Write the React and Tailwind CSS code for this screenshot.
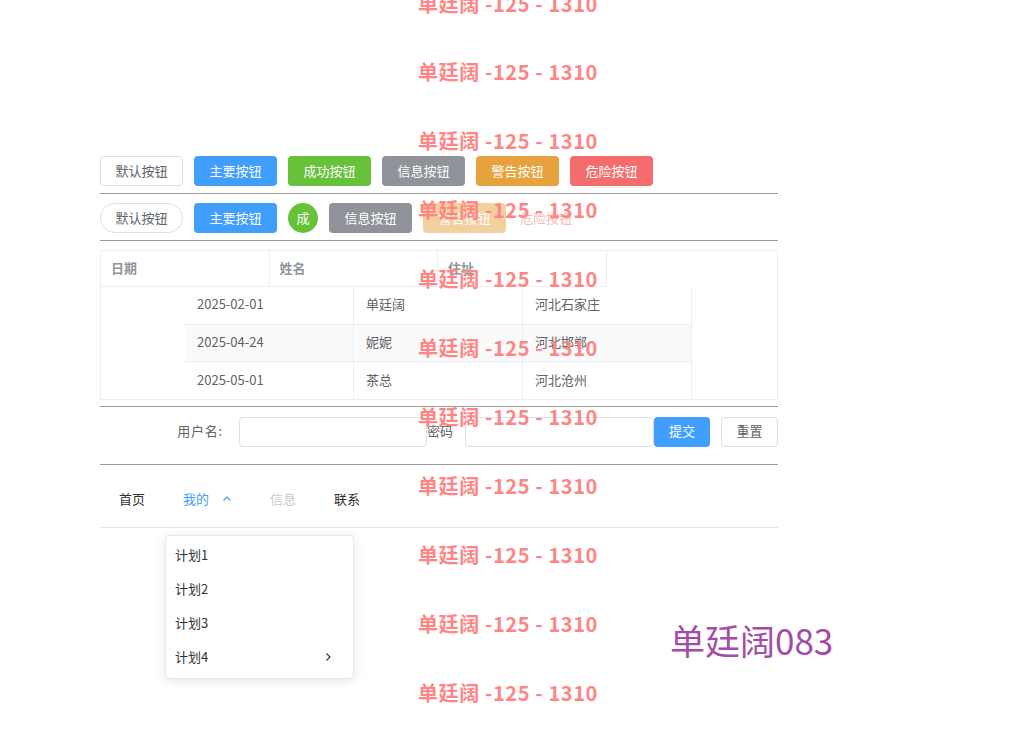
import React from "react";

const font = { fontFamily: '"Noto Sans CJK SC", "Noto Sans", sans-serif' };

const rows = [
 { date: "2025-02-01", name: "单廷阔", addr: "河北石家庄" },
 { date: "2025-04-24", name: "妮妮", addr: "河北邯郸" },
 { date: "2025-05-01", name: "茶总", addr: "河北沧州" },
];

const Btn = ({ className, children }) => (
 <button
  className={
   "h-[30px] w-[83px] pb-[2px] rounded-[4px] text-[13px] leading-none flex items-center justify-center " +
   className
  }
 >
  {children}
 </button>
);

const Line = () => <div className="h-[2px] border-t border-[#9c9c9c] border-b-[#e6e6e6]" />;

const Watermark = () => (
 <div className="absolute inset-0 pointer-events-none">
  {[4, 72, 141, 210, 279, 348, 417, 486, 555, 624, 693].map((y) => (
   <div
    key={y}
    className="absolute left-[418px] text-[20px] font-bold leading-[24px] tracking-[0.6px] text-[#ff8585] whitespace-nowrap"
    style={{ top: y - 12, ...font }}
   >
    单廷阔 -125 - 1310
   </div>
  ))}
 </div>
);

export default function App() {
 return (
  <div className="relative w-[1016px] h-[752px] bg-white overflow-hidden" style={font}>
   <div className="ml-[100px] w-[678px] pt-[156px]">
    {/* buttons row 1 */}
    <div className="flex gap-[11px]">
     <Btn className="border border-[#dcdfe6] text-[#606266] bg-white">默认按钮</Btn>
     <Btn className="bg-[#409eff] text-white">主要按钮</Btn>
     <Btn className="bg-[#67c23a] text-white">成功按钮</Btn>
     <Btn className="bg-[#909399] text-white">信息按钮</Btn>
     <Btn className="bg-[#e6a23c] text-white">警告按钮</Btn>
     <Btn className="bg-[#f56c6c] text-white">危险按钮</Btn>
    </div>
    <div className="mt-[7px] mb-[8px]">
     <Line />
    </div>
    {/* buttons row 2 */}
    <div className="flex gap-[11px] items-center">
     <Btn className="border border-[#dcdfe6] text-[#606266] bg-white rounded-full!">默认按钮</Btn>
     <Btn className="bg-[#409eff] text-white">主要按钮</Btn>
     <button className="h-[30px] w-[30px] rounded-full bg-[#67c23a] text-white text-[13px] leading-none flex items-center justify-center pb-[2px]">
      成
     </button>
     <Btn className="bg-[#909399] text-white">信息按钮</Btn>
     <Btn className="bg-[#f3d19e] text-white">警告按钮</Btn>
     <button className="h-[30px] ml-[3px] pb-[2px] text-[13px] leading-none text-[#fab6b6]">危险按钮</button>
    </div>
    <div className="mt-[7px] mb-[8px]">
     <Line />
    </div>
    {/* table */}
    <div className="h-[150px] border border-[#ebeef5] text-[13px]">
     <div className="flex h-[36px]">
      {["日期", "姓名", "住址"].map((h) => (
       <div
        key={h}
        className="w-[168.5px] border-r border-b border-[#ebeef5] pl-[10px] pb-[2px] flex items-center font-bold text-[#909399]"
       >
        {h}
       </div>
      ))}
     </div>
     {rows.map((r, i) => (
      <div key={r.date} className={"flex ml-[84px] w-[507px] h-[37.5px] " + (i === 1 ? "bg-[#fafafa]" : "")}>
       {[r.date, r.name, r.addr].map((c, j) => (
        <div
         key={j}
         className={
          "w-[169px] border-r border-[#ebeef5] pl-[12px] pb-[3px] flex items-center text-[#606266] " +
          (i < 2 ? "border-b" : "")
         }
        >
         {c}
        </div>
       ))}
      </div>
     ))}
    </div>
    <div className="mt-[6px] mb-[9px]">
     <Line />
    </div>
    {/* form */}
    <div className="flex items-center h-[30px] text-[13px] text-[#606266]">
     <label className="w-[139px] pr-[16px] pb-[2px] text-right tracking-[0.8px]">用户名:</label>
     <input className="w-[188px] h-[30px] border border-[#dcdfe6] rounded-[4px] outline-none" />
     <label className="w-[38px] pb-[2px]">密码</label>
     <input className="w-[189px] h-[30px] border border-[#dcdfe6] rounded-[4px] outline-none" />
     <button className="w-[56px] h-[30px] pb-[2px] rounded-[4px] bg-[#409eff] text-white">提交</button>
     <button className="ml-[11px] w-[57px] h-[30px] pb-[2px] rounded-[4px] border border-[#dcdfe6] text-[#606266]">
      重置
     </button>
    </div>
    <div className="mt-[17px]">
     <Line />
    </div>
    {/* menu */}
    <div className="relative">
     <div className="mt-[2px] h-[60px] pt-[3px] border-b border-[#e4e7ed] flex items-center text-[13px]">
      <div className="px-[19px] text-[#303133]">首页</div>
      <div className="px-[19px] text-[#409eff] flex items-center gap-[13px]">
       我的
       <svg width="10" height="10" viewBox="0 0 10 10" fill="none" stroke="#409eff" strokeWidth="1.2">
        <path d="M1.5 6.5 L5 3 L8.5 6.5" />
       </svg>
      </div>
      <div className="px-[19px] text-[#c8c9cc]">信息</div>
      <div className="px-[19px] text-[#303133]">联系</div>
     </div>
     <div className="absolute left-[65px] top-[67px] w-[189px] py-[3px] bg-white border border-[#e4e7ed] rounded-[4px] shadow-[0_2px_12px_rgba(0,0,0,0.1)] text-[13px] text-[#303133]">
      {["计划1", "计划2", "计划3", "计划4"].map((t, i) => (
       <div key={t} className="h-[34px] pl-[9px] pr-[20px] pb-[2px] flex items-center justify-between">
        {t}
        {i === 3 && (
         <svg width="10" height="10" viewBox="0 0 10 10" fill="none" stroke="#303133" strokeWidth="1.1">
          <path d="M3.5 1.5 L7 5 L3.5 8.5" />
         </svg>
        )}
       </div>
      ))}
     </div>
    </div>
    {/* purple text */}
    <div className="ml-[570px] mt-[88px] text-[35px] leading-[48px] text-[#a24ca6] whitespace-nowrap">
     单廷阔083
    </div>
   </div>
   <Watermark />
  </div>
 );
}
